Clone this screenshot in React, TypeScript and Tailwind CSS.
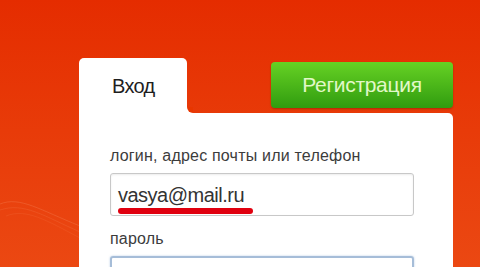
export default function App() {
  return (
    <div
      className="relative w-[480px] h-[267px] overflow-hidden flex flex-col pl-[79px] pt-[58px] bg-gradient-to-b from-[#e52c00] to-[#eb4812]"
      style={{ fontFamily: '"Liberation Sans", Arial, sans-serif' }}
    >
      {/* faint swooshes in the background */}
      <svg className="absolute left-0 top-[196px]" width="80" height="60" viewBox="0 0 80 60" fill="none">
        <path d="M0 8 C20 0 40 14 80 30" stroke="#f58a60" strokeOpacity="0.3" strokeWidth="1" />
        <path d="M0 14 C24 6 44 20 80 36" stroke="#f58a60" strokeOpacity="0.2" strokeWidth="1" />
        <path d="M6 20 C26 12 46 24 80 42" stroke="#f58a60" strokeOpacity="0.15" strokeWidth="1" />
      </svg>

      <div className="relative w-[374px] flex flex-col flex-1">
        {/* Tabs row */}
        <div className="flex items-start">
          <div className="w-[108px] h-[55px] bg-white rounded-t-[5px] pl-[33px] pt-[17px] text-[20px] leading-[22px] tracking-[-0.7px] text-[#1e1e1e]">
            Вход
          </div>
          <div className="flex-1 self-end h-[6px] flex">
            <div className="w-[6px] h-[6px] bg-white">
              <div className="w-[6px] h-[6px] bg-[#e83600] rounded-bl-[6px]" />
            </div>
          </div>
          <button className="w-[182px] h-[46px] mt-[4px] rounded-[4px] bg-gradient-to-b from-[#66d224] to-[#2f9c0f] text-[21px] tracking-[-0.3px] text-[#e2f8c8] flex items-center justify-center shadow-[0_1px_2px_rgba(0,0,0,0.25)]">
            Регистрация
          </button>
        </div>

        {/* Panel */}
        <div className="flex-1 bg-white rounded-tr-[5px] pl-[31px] pr-[40px] pt-[34px] flex flex-col">
          <div className="text-[16px] leading-[18px] tracking-[0.2px] text-[#3c3c3c]">логин, адрес почты или телефон</div>
          <div className="mt-[8px] h-[43px] w-[304px] border border-[#c8c8c8] rounded-[3px] shadow-[inset_0_1px_2px_rgba(0,0,0,0.08)] flex flex-col pl-[7px] pt-[10px]">
            <span className="text-[20px] leading-[23px] tracking-[-0.5px] text-[#333]">vasya@mail.ru</span>
            <div className="w-[135px] h-[6px] rounded-full bg-[#e0000f] mt-[1px]" />
          </div>
          <div className="mt-[14px] text-[16px] leading-[18px] tracking-[0.2px] text-[#3c3c3c]">пароль</div>
          <div className="mt-[8px] h-[40px] w-[304px] border-2 border-[#a6bdd8] rounded-[3px] shadow-[0_0_2px_rgba(120,160,210,0.6)]" />
        </div>
      </div>
    </div>
  )
}
